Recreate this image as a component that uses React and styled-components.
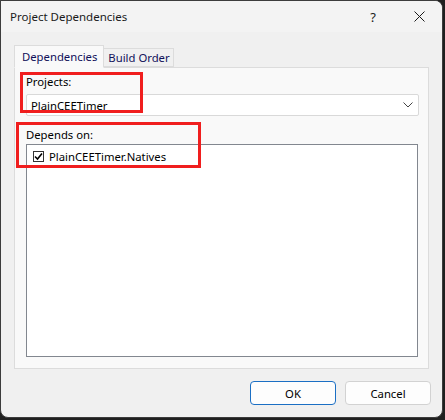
import React from 'react'
import styled, { createGlobalStyle } from 'styled-components'

const Global = createGlobalStyle`
  html, body {
    margin: 0;
    padding: 0;
    background: #1f1f1f;
    font-family: "Segoe UI", "Noto Sans", "Liberation Sans", sans-serif;
    font-size: 11.3px;
    color: #000;
  }
`

function App() {
  return (
    <>
      <Global />
      <Window>
        <TitleBar>
          <Title>Project Dependencies</Title>
          <CaptionButton>?</CaptionButton>
          <CaptionButton>
            <svg width="11" height="11" viewBox="0 0 11 11">
              <path d="M0.5 0.5 L10.5 10.5 M10.5 0.5 L0.5 10.5" stroke="#1a1a1a" strokeWidth="1" />
            </svg>
          </CaptionButton>
        </TitleBar>
        <Body>
          <Tabs>
            <Tab active>Dependencies</Tab>
            <Tab>Build Order</Tab>
          </Tabs>
          <Panel>
            <Label>Projects:</Label>
            <Combo>
              <span>PlainCEETimer</span>
              <svg width="10" height="6" viewBox="0 0 10 6">
                <path d="M0.5 0.5 L5 5 L9.5 0.5" stroke="#444" strokeWidth="1" fill="none" />
              </svg>
            </Combo>
            <Label second>Depends on:</Label>
            <ListBox>
              <ListItem>
                <CheckBox>
                  <svg width="9" height="9" viewBox="0 0 9 9">
                    <path d="M1 4.5 L3.5 7 L8 1.5" stroke="#000" strokeWidth="1.6" fill="none" />
                  </svg>
                </CheckBox>
                PlainCEETimer.Natives
              </ListItem>
            </ListBox>
          </Panel>
          <Footer>
            <Button primary>OK</Button>
            <Button>Cancel</Button>
          </Footer>
        </Body>
        <Highlight style={{ left: 19, top: 71, width: 123, height: 41 }} />
        <Highlight style={{ left: 15, top: 121, width: 185, height: 46 }} />
      </Window>
    </>
  )
}

export default App

const Window = styled.div`
  position: relative;
  width: 441px;
  height: 416px;
  border: 1px solid #3c3c3c;
  border-radius: 0 8px 8px 8px;
  background: #f0f0f0;
  display: flex;
  flex-direction: column;
  overflow: hidden;
`

const TitleBar = styled.div`
  height: 31px;
  background: #f3f3f3;
  display: flex;
  align-items: center;
  padding-left: 9px;
  flex-shrink: 0;
`

const Title = styled.div`
  flex: 1;
  font-size: 11.5px;
  color: #1a1a1a;
`

const CaptionButton = styled.div`
  width: 46px;
  height: 31px;
  display: flex;
  align-items: center;
  justify-content: center;
  font-size: 13px;
  color: #1a1a1a;
`

const Body = styled.div`
  flex: 1;
  display: flex;
  flex-direction: column;
  padding: 12px 13px 0 13px;
`

const Tabs = styled.div`
  display: flex;
  align-items: flex-end;
  height: 23px;
  position: relative;
  z-index: 1;
`

const Tab = styled.div`
  height: ${p => (p.active ? '23px' : '19px')};
  padding: ${p => (p.active ? '0 6px 0 7px' : '0 3px 0 4px')};
  display: flex;
  align-items: center;
  background: ${p => (p.active ? '#f9f9f9' : '#f0f0f0')};
  border: 1px solid #dcdcdc;
  border-bottom: ${p => (p.active ? '1px solid #f9f9f9' : '1px solid #dcdcdc')};
  border-left: ${p => (p.active ? '1px solid #dcdcdc' : 'none')};
  color: #10105a;
  box-sizing: border-box;
  margin-bottom: ${p => (p.active ? '-1px' : '0')};
`

const Panel = styled.div`
  height: 302px;
  background: #f9f9f9;
  border: 1px solid #dcdcdc;
  box-sizing: border-box;
  padding: 6px 9px 0 11px;
  display: flex;
  flex-direction: column;
`

const Label = styled.div`
  height: 15px;
  line-height: 15px;
  margin-top: ${p => (p.second ? '11px' : '0')};
  margin-bottom: ${p => (p.second ? '2px' : '5px')};
`

const Combo = styled.div`
  height: 22px;
  background: #fff;
  border: 1px solid #d9d9d9;
  border-radius: 2px;
  box-sizing: border-box;
  display: flex;
  align-items: center;
  justify-content: space-between;
  padding: 0 5px 0 4px;
`

const ListBox = styled.div`
  height: 213px;
  background: #fff;
  border: 1px solid #82878f;
  box-sizing: border-box;
  margin-right: 1px;
  padding: 3px 6px;
`

const ListItem = styled.div`
  display: flex;
  align-items: center;
  gap: 5px;
  height: 16px;
`

const CheckBox = styled.div`
  width: 11px;
  height: 11px;
  border: 1px solid #333;
  box-sizing: border-box;
  display: flex;
  align-items: center;
  justify-content: center;
  background: #fff;
`

const Footer = styled.div`
  display: flex;
  justify-content: flex-end;
  gap: 9px;
  padding-top: 12px;
  margin-right: -2px;
`

const Button = styled.div`
  width: 86px;
  height: 24px;
  box-sizing: border-box;
  border: 1px solid ${p => (p.primary ? '#1b6fc4' : '#d2d2d2')};
  border-radius: 4px;
  background: #fdfdfd;
  display: flex;
  align-items: center;
  justify-content: center;
  color: #000;
`

const Highlight = styled.div`
  position: absolute;
  border: 3px solid #f01e1e;
  box-sizing: border-box;
  pointer-events: none;
`
